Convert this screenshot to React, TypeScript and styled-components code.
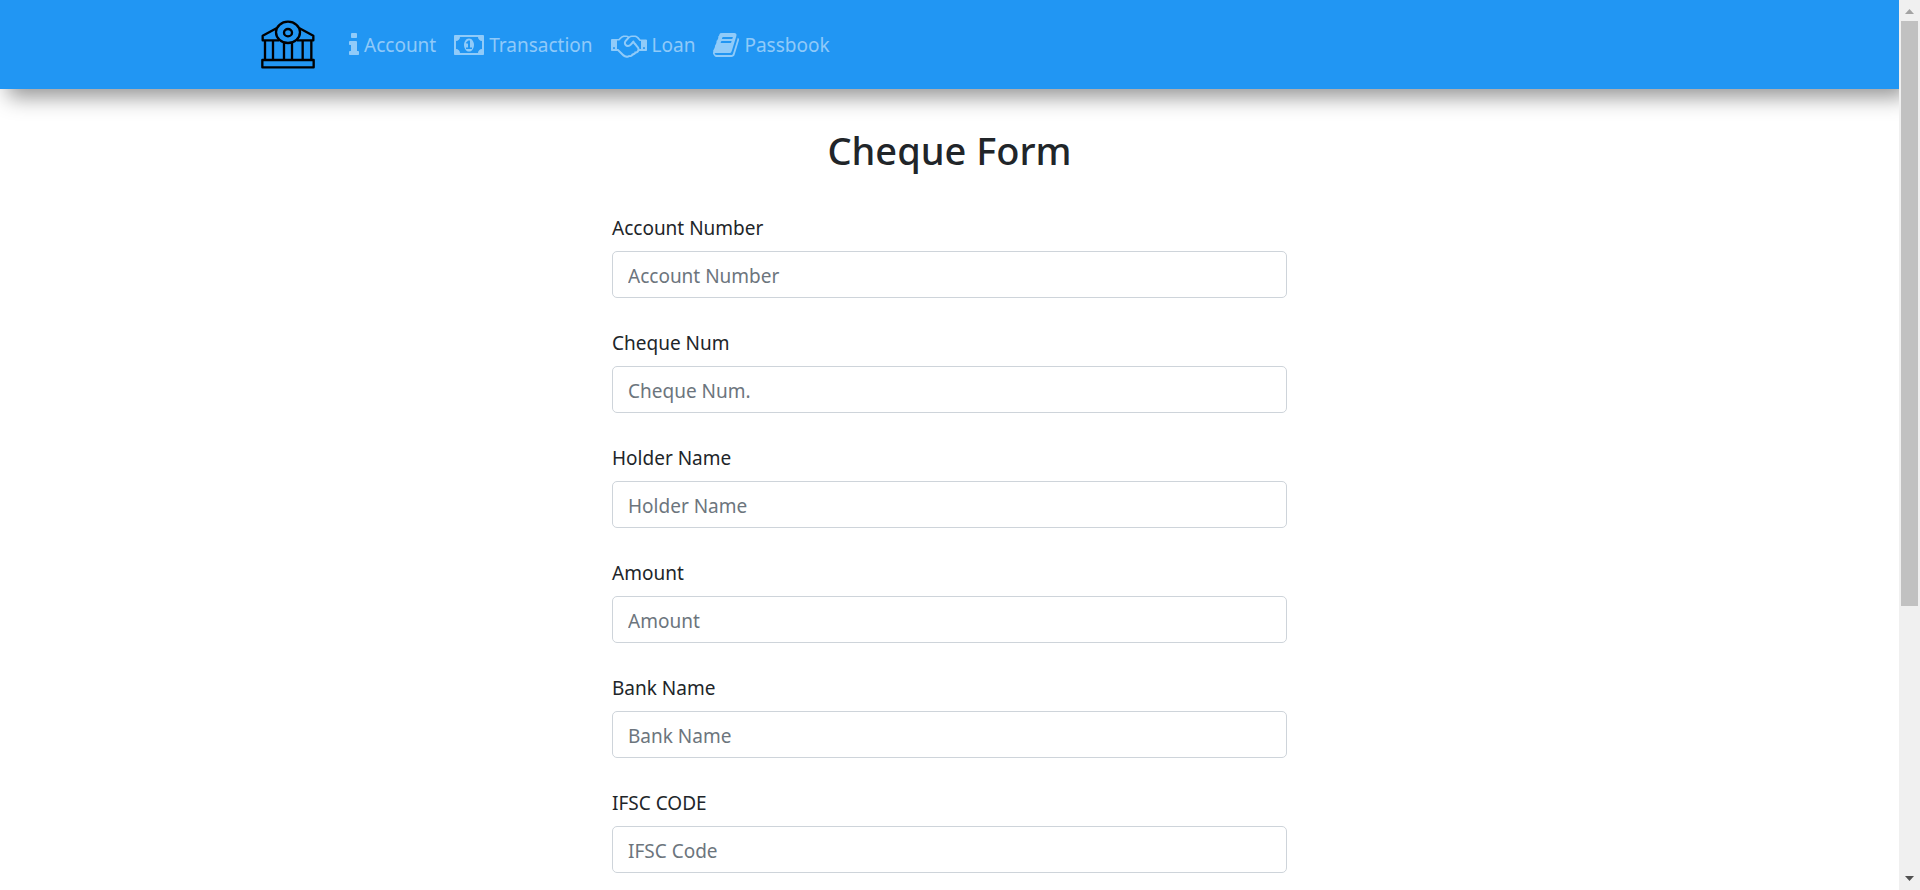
import React from 'react';
import styled, { createGlobalStyle } from 'styled-components';

const GlobalStyle = createGlobalStyle`
  *, *::before, *::after { box-sizing: border-box; }
  body {
    margin: 0;
    background: #fff;
    color: #212529;
    font-family: "Segoe UI", "Noto Sans", "Open Sans", sans-serif;
    font-size: 19px;
    line-height: 30px;
  }
`;

const Window = styled.div`
  display: flex;
  height: 100vh;
`;

const Page = styled.div`
  flex: 1;
  min-width: 0;
  overflow-x: hidden;
  overflow-y: auto;
  scrollbar-width: none;
`;

const Navbar = styled.header`
  background: #2196f3;
  box-shadow: 8px 8px 20px 0 rgba(0, 0, 0, 0.42);
`;

const NavInner = styled.nav`
  display: flex;
  align-items: center;
  max-width: 1425px;
  margin: 0 auto;
  padding: 20px 24px;
`;

const Brand = styled.a`
  display: flex;
  margin-right: 25px;
  color: #000;
`;

const NavList = styled.ul`
  display: flex;
  margin: 0;
  padding: 0;
  list-style: none;
`;

const NavLink = styled.a`
  display: flex;
  align-items: center;
  gap: 5px;
  padding: 1px 9px 0;
  color: rgba(255, 255, 255, 0.5);
  text-decoration: none;

  svg {
    height: 28px;
    width: auto;
    fill: currentColor;
  }
`;

const Main = styled.main`
  width: 100%;
  max-width: 675px;
  margin: 0 auto;
  padding: 32px 0 40px;
`;

const Title = styled.h1`
  margin: 0 0 34px;
  font-size: 38px;
  font-weight: 500;
  line-height: 58px;
  text-align: center;
`;

const Form = styled.form`
  display: grid;
  gap: 30px;
`;

const Field = styled.div`
  display: grid;
  gap: 8px;
`;

const Input = styled.input`
  width: 100%;
  height: 47px;
  padding: 2px 15px 0;
  border: 1px solid #ced4da;
  border-radius: 5px;
  background: #fff;
  color: #495057;
  font: inherit;

  &::placeholder {
    color: #6c757d;
    opacity: 1;
  }
`;

const ScrollColumn = styled.div`
  display: flex;
  flex: none;
  flex-direction: column;
  width: 21px;
  padding: 0 2px;
  background: #f0f0f0;
`;

const ScrollArrow = styled.svg<{ $active?: boolean }>`
  flex: none;
  width: 17px;
  height: 21px;
  fill: ${(p) => (p.$active ? '#505050' : '#a3a3a3')};
`;

const ScrollTrack = styled.div`
  flex: 1;
`;

const ScrollThumb = styled.div`
  height: 69%;
  background: #c1c1c1;
`;

const BankLogo = () => (
  <svg width="54" height="49" viewBox="33 30 162 147" fill="none" stroke="currentColor" strokeWidth="7" strokeLinejoin="round">
    <ellipse cx="114" cy="67" rx="36" ry="32" />
    <ellipse cx="114" cy="68" rx="12" ry="11" />
    <path d="M81 54L38 77V91H87M147 54L190 77V91H141" />
    <path d="M45 91V150M69 91V150M102 99V150M126 99V150M158 91V150M184 91V150" />
    <path d="M37 150H191V172H37Z" />
  </svg>
);

const InfoIcon = () => (
  <svg viewBox="0 0 640 1792" aria-hidden="true">
    <path d="M640 1344v128q0 26-19 45t-45 19H64q-26 0-45-19t-19-45v-128q0-26 19-45t45-19h64V896H64q-26 0-45-19T0 832V704q0-26 19-45t45-19h384q26 0 45 19t19 45v576h64q26 0 45 19t19 45zM512 192v192q0 26-19 45t-45 19H192q-26 0-45-19t-19-45V192q0-26 19-45t45-19h256q26 0 45 19t19 45z" />
  </svg>
);

const MoneyIcon = () => (
  <svg viewBox="0 0 1920 1792" aria-hidden="true">
    <path d="M768 1152h384v-96h-128V608H910L762 745l77 80q42-37 55-57h2v288H768v96zm512-256q0 70-21 142t-59.500 134-101.500 101-138 39-138-39-101.500-101-59.500-134-21-142 21-142 59.500-134T822 519t138-39 138 39 101.500 101 59.500 134 21 142zm512 256V640q-106 0-181-75t-75-181H384q0 106-75 181t-181 75v512q106 0 181 75t75 181h1152q0-106 75-181t181-75zm128-832v1152q0 26-19 45t-45 19H64q-26 0-45-19t-19-45V320q0-26 19-45t45-19h1792q26 0 45 19t19 45z" />
  </svg>
);

const HandshakeIcon = () => (
  <svg viewBox="0 0 2304 1792" aria-hidden="true">
    <path d="M192 1152q40 0 56-32t0-64-56-32-56 32 0 64 56 32zm1473-58q-10-13-38.500-50t-41.500-54-38-49-42.500-53-40.500-47-45-49l-125 140q-83 94-208.500 92t-205.500-98q-57-69-56.500-158t58.500-157l177-206q-22-11-51-16.500t-47.500-6-56.500.5-49 1q-92 0-158 66l-158 158H384v544q5 0 21-.5t22 0 19.500 2 20.500 4.500 17.500 8.500 18.500 13.500l297 292q115 111 227 111 78 0 125-47 57 20 112.500-8t72.500-85q74 6 127-44 20-18 36-45.500t14-50.500q10 10 43 10 43 0 77-21t49.500-53 12-71.500-30.500-73.500zm159 58h96V640h-93l-157-180q-66-76-169-76h-167q-89 0-146 67l-209 243q-28 33-28 75t27 75q43 51 110 52t111-49l193-218q25-23 53.500-21.500t47 27 8.500 56.500q16 19 56 63t60 68q29 36 82.500 105.500t64.500 84.500q52 66 60 140zm288 0q40 0 56-32t0-64-56-32-56 32 0 64 56 32zm192-576v640q0 26-19 45t-45 19h-434q-27 65-82 106.500t-125 51.500q-33 48-80.500 81.500t-102.500 45.500q-42 53-104.500 81.500t-128.500 24.500q-60 34-126 39.500t-127.500-14-117-53.500-103.500-81l-287-282H64q-26 0-45-19t-19-45V576q0-26 19-45t45-19h421q14-14 47-48t47.500-48 44-40 50.500-37.500 51-25.500 62-19.500 68-5.500h117q99 0 181 56 82-56 181-56h167q35 0 67 6t56.500 14.500 51.500 26.500 44.500 31 43 39.500 39 41 41 45 41.500 48.500h355q26 0 45 19t19 45z" />
  </svg>
);

const BookIcon = () => (
  <svg viewBox="64 0 1664 1792" aria-hidden="true">
    <path d="M1703 478q40 57 18 129l-275 906q-19 64-76.500 107.500T1247 1664H324q-77 0-148.500-53.500T76 1479q-24-67-2-127 0-4 3-27t4-37q1-8-3-21.500t-3-19.500q2-11 8-21t16.500-23.500T116 1179q23-38 45-91.500t30-91.500q3-10 .5-30t-.5-28q3-11 17-28t17-23q21-36 42-92t25-90q1-9-2.500-32t.5-28q4-13 22-30.500t22-22.500q19-26 42.500-84.500T404 411q1-8-3-25.500t-2-26.500q2-8 9-18t18-23 17-21q8-12 16.500-30.500t15-35 16-36 19.500-32T533.500 139.500 569 128t47.500 5.500l-1 3q38-9 51-9h761q74 0 114 56t18 130l-274 906q-36 119-71.500 153.500T1085 1408H216q-27 0-38 15-11 16-1 43 24 70 144 70h923q29 0 56-15.500t35-41.500l300-987q7-22 5-57 38 15 59 43zm-1064 2q-4 13 2 22.500t20 9.500h608q13 0 25.500-9.500T1311 480l21-64q4-13-2-22.500t-20-9.500H702q-13 0-25.500 9.500T660 416zm-83 256q-4 13 2 22.500t20 9.500h608q13 0 25.500-9.500T1228 736l21-64q4-13-2-22.500t-20-9.500H619q-13 0-25.500 9.500T577 672z" />
  </svg>
);

const links = [
  { text: 'Account', icon: <InfoIcon /> },
  { text: 'Transaction', icon: <MoneyIcon /> },
  { text: 'Loan', icon: <HandshakeIcon /> },
  { text: 'Passbook', icon: <BookIcon /> },
];

const fields = [
  { id: 'account-number', label: 'Account Number', placeholder: 'Account Number' },
  { id: 'cheque-number', label: 'Cheque Num', placeholder: 'Cheque Num.' },
  { id: 'holder-name', label: 'Holder Name', placeholder: 'Holder Name' },
  { id: 'amount', label: 'Amount', placeholder: 'Amount' },
  { id: 'bank-name', label: 'Bank Name', placeholder: 'Bank Name' },
  { id: 'ifsc-code', label: 'IFSC CODE', placeholder: 'IFSC Code' },
];

export default function App() {
  return (
    <Window>
      <GlobalStyle />
      <Page>
        <Navbar>
          <NavInner>
            <Brand href="#" aria-label="Home">
              <BankLogo />
            </Brand>
            <NavList>
              {links.map((link) => (
                <li key={link.text}>
                  <NavLink href="#">
                    {link.icon}
                    {link.text}
                  </NavLink>
                </li>
              ))}
            </NavList>
          </NavInner>
        </Navbar>
        <Main>
          <Title>Cheque Form</Title>
          <Form>
            {fields.map((field) => (
              <Field key={field.id}>
                <label htmlFor={field.id}>{field.label}</label>
                <Input id={field.id} type="text" placeholder={field.placeholder} />
              </Field>
            ))}
          </Form>
        </Main>
      </Page>
      <ScrollColumn aria-hidden="true">
        <ScrollArrow viewBox="0 0 17 21">
          <path d="M4 14L8.500 9L13 14Z" />
        </ScrollArrow>
        <ScrollTrack>
          <ScrollThumb />
        </ScrollTrack>
        <ScrollArrow $active viewBox="0 0 17 21">
          <path d="M4 7H13L8.500 12Z" />
        </ScrollArrow>
      </ScrollColumn>
    </Window>
  );
}
